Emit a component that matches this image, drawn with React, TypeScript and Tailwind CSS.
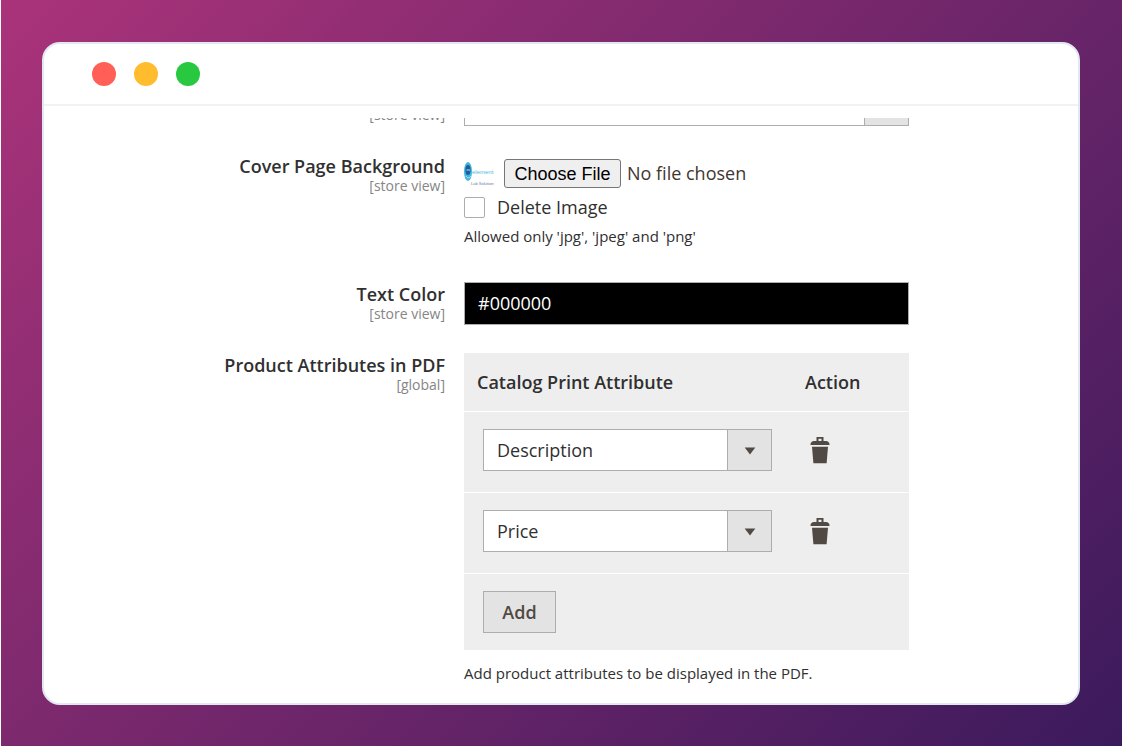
import { useState } from 'react';
import type { ReactNode } from 'react';

type Attribute = { id: number; value: string };

const OPTIONS = ['Description', 'Price'];

function Scope({ children, id }: { children: ReactNode; id?: string }) {
  return (
    <span id={id} className="block text-sm leading-[19px] text-[#858585]">
      {children}
    </span>
  );
}

function Row({ label, children }: { label: ReactNode; children: ReactNode }) {
  return (
    <div className="grid grid-cols-[401fr_445fr] gap-[19px]">
      <div className="pt-0.5 text-right">{label}</div>
      <div className="min-w-0">{children}</div>
    </div>
  );
}

function FieldLabel({ htmlFor, title, scope }: { htmlFor: string; title: string; scope: string }) {
  return (
    <label htmlFor={htmlFor} className="block">
      <span className="block text-lg leading-5 font-semibold text-[#303030]">{title}</span>
      <Scope>{scope}</Scope>
    </label>
  );
}

function SelectArrow({ showIcon = true }: { showIcon?: boolean }) {
  return (
    <span className="pointer-events-none absolute inset-y-0 right-0 flex w-[45px] items-center justify-center border border-[#adadad] bg-[#e3e3e3]">
      {showIcon && (
        <svg width="12" height="8" viewBox="0 0 12 8" className="mt-0.5 fill-[#514943]" aria-hidden="true">
          <path d="M.7.5h10.6L6 7.5z" />
        </svg>
      )}
    </span>
  );
}

function TrashIcon() {
  return (
    <svg width="20" height="27" viewBox="0 0 20 27" aria-hidden="true">
      <path
        fill="#514943"
        fillRule="evenodd"
        d="M6.500 0h7v4h2.500c2 0 3.500 1.300 3.500 3.200v.8H.5v-.8C.5 5.300 2 4 4 4h2.500zM8.500 1.700v2.300h3V1.700z"
      />
      <path fill="#514943" d="M2 9.700h16l-1.400 16.500H3.400z" />
    </svg>
  );
}

function LogoThumb() {
  return (
    <svg width="30" height="28" viewBox="0 0 30 28" className="shrink-0" role="img" aria-label="element Lab Solutions">
      <ellipse cx="4" cy="11.500" rx="4" ry="9.500" fill="#45b5df" />
      <ellipse cx="4" cy="10" rx="2.600" ry="5" fill="#1c5f9b" />
      <path d="M2.500 10h3.500M2 16c1.500 2.500 3.500 2.500 5 0" stroke="#b9e4f3" strokeWidth="1" fill="none" />
      <text x="8" y="14" fontSize="6" fill="#4cbce0" className="font-['Liberation_Sans',sans-serif]">
        element
      </text>
      <text x="7" y="25" fontSize="4" fill="#6d7ba5" className="font-['Liberation_Sans',sans-serif]">
        Lab Solutions
      </text>
    </svg>
  );
}

export default function App() {
  const [attributes, setAttributes] = useState<Attribute[]>([
    { id: 1, value: 'Description' },
    { id: 2, value: 'Price' },
  ]);
  const [textColor, setTextColor] = useState('#000000');
  const [deleteImage, setDeleteImage] = useState(false);

  const addAttribute = () => setAttributes((list) => [...list, { id: Date.now(), value: OPTIONS[0] }]);
  const removeAttribute = (id: number) => setAttributes((list) => list.filter((a) => a.id !== id));
  const changeAttribute = (id: number, value: string) =>
    setAttributes((list) => list.map((a) => (a.id === id ? { ...a, value } : a)));

  return (
    <div className="min-h-screen bg-white pb-px pl-px font-['Open_Sans','Noto_Sans',sans-serif] text-[#41362f]">
      <div className="bg-[linear-gradient(135deg,#aa337a,#3b1a5c)] pt-[42px] pr-[42px] pb-[41px] pl-[41px]">
        <main className="overflow-hidden rounded-[18px] border-2 border-[#e2e8f0] bg-white">
          <header className="flex h-[62px] items-center gap-[18px] border-b-2 border-[#f2f2f2] pl-12">
            <span className="size-6 rounded-full bg-[#ff5f57]" />
            <span className="size-6 rounded-full bg-[#ffbd2e]" />
            <span className="size-6 rounded-full bg-[#28c940]" />
          </header>

          <div className="mt-3 overflow-hidden pr-[169px] pb-4">
            {/* first field is scrolled partly out of view */}
            <form className="-mt-[34px] flex flex-col gap-7" onSubmit={(e) => e.preventDefault()}>
              <Row
                label={
                  <div className="pt-[19px]">
                    <Scope id="first-scope">[store view]</Scope>
                  </div>
                }
              >
                <div className="relative">
                  <select
                    aria-labelledby="first-scope"
                    className="block h-[42px] w-full appearance-none border border-[#adadad] bg-white"
                  />
                  <SelectArrow showIcon={false} />
                </div>
              </Row>

              <Row label={<FieldLabel htmlFor="cover" title="Cover Page Background" scope="[store view]" />}>
                <div className="flex h-[39px] items-center gap-2.5">
                  <LogoThumb />
                  <input
                    id="cover"
                    type="file"
                    accept=".jpg,.jpeg,.png"
                    className="min-w-0 flex-1 text-lg leading-7 text-[#41362f] file:mr-1.5 file:h-[29px] file:w-[117px] file:rounded-[3px] file:border file:border-solid file:border-[#767676] file:bg-[#efefef] file:p-0 file:font-['Liberation_Sans',Arial,sans-serif] file:text-lg file:leading-6 file:text-black"
                  />
                </div>
                <label className="flex h-7 items-center gap-3 text-lg text-[#303030]">
                  <input
                    type="checkbox"
                    checked={deleteImage}
                    onChange={(e) => setDeleteImage(e.target.checked)}
                    className="size-[21px] appearance-none rounded-[2px] border border-[#adadad] bg-white checked:bg-[#514943]"
                  />
                  Delete Image
                </label>
                <p className="pb-[3px] text-[15px] leading-[30px] text-[#303030]">Allowed only 'jpg', 'jpeg' and 'png'</p>
              </Row>

              <Row label={<FieldLabel htmlFor="text-color" title="Text Color" scope="[store view]" />}>
                <input
                  id="text-color"
                  type="text"
                  value={textColor}
                  onChange={(e) => setTextColor(e.target.value)}
                  className="block h-[43px] w-full border border-[#adadad] bg-black px-[13px] pb-0.5 text-lg text-white"
                />
              </Row>

              <Row label={<FieldLabel htmlFor="attribute-1" title="Product Attributes in PDF" scope="[global]" />}>
                <table className="w-full table-fixed border-collapse bg-[#eee] text-left">
                  <thead>
                    <tr className="h-[58px] border-b border-white text-lg text-[#303030]">
                      <th scope="col" className="w-[328px] px-[13px] font-semibold">
                        Catalog Print Attribute
                      </th>
                      <th scope="col" className="px-[13px] font-semibold">
                        Action
                      </th>
                    </tr>
                  </thead>
                  <tbody>
                    {attributes.map((attribute, i) => (
                      <tr key={attribute.id} className="h-[81px] border-b border-white align-top">
                        <td className="pt-[17px] pl-[19px]">
                          <div className="relative w-[289px]">
                            <select
                              id={`attribute-${i + 1}`}
                              aria-label="Catalog Print Attribute"
                              value={attribute.value}
                              onChange={(e) => changeAttribute(attribute.id, e.target.value)}
                              className="block h-[42px] w-full appearance-none border border-[#adadad] bg-white px-[13px] text-lg text-[#303030]"
                            >
                              {OPTIONS.map((option) => (
                                <option key={option}>{option}</option>
                              ))}
                            </select>
                            <SelectArrow />
                          </div>
                        </td>
                        <td className="pt-[25px] pl-[18px]">
                          <button type="button" aria-label="Delete" onClick={() => removeAttribute(attribute.id)} className="block">
                            <TrashIcon />
                          </button>
                        </td>
                      </tr>
                    ))}
                  </tbody>
                  <tfoot>
                    <tr className="h-[77px] align-top">
                      <td colSpan={2} className="pt-[17px] pl-[19px]">
                        <button
                          type="button"
                          onClick={addAttribute}
                          className="block h-[42px] w-[73px] border border-[#adadad] bg-[#e3e3e3] text-lg font-semibold text-[#514943]"
                        >
                          Add
                        </button>
                      </td>
                    </tr>
                  </tfoot>
                </table>
                <p className="pt-[9px] text-[15px] leading-7 text-[#303030]">
                  Add product attributes to be displayed in the PDF.
                </p>
              </Row>
            </form>
          </div>
        </main>
      </div>
    </div>
  );
}
